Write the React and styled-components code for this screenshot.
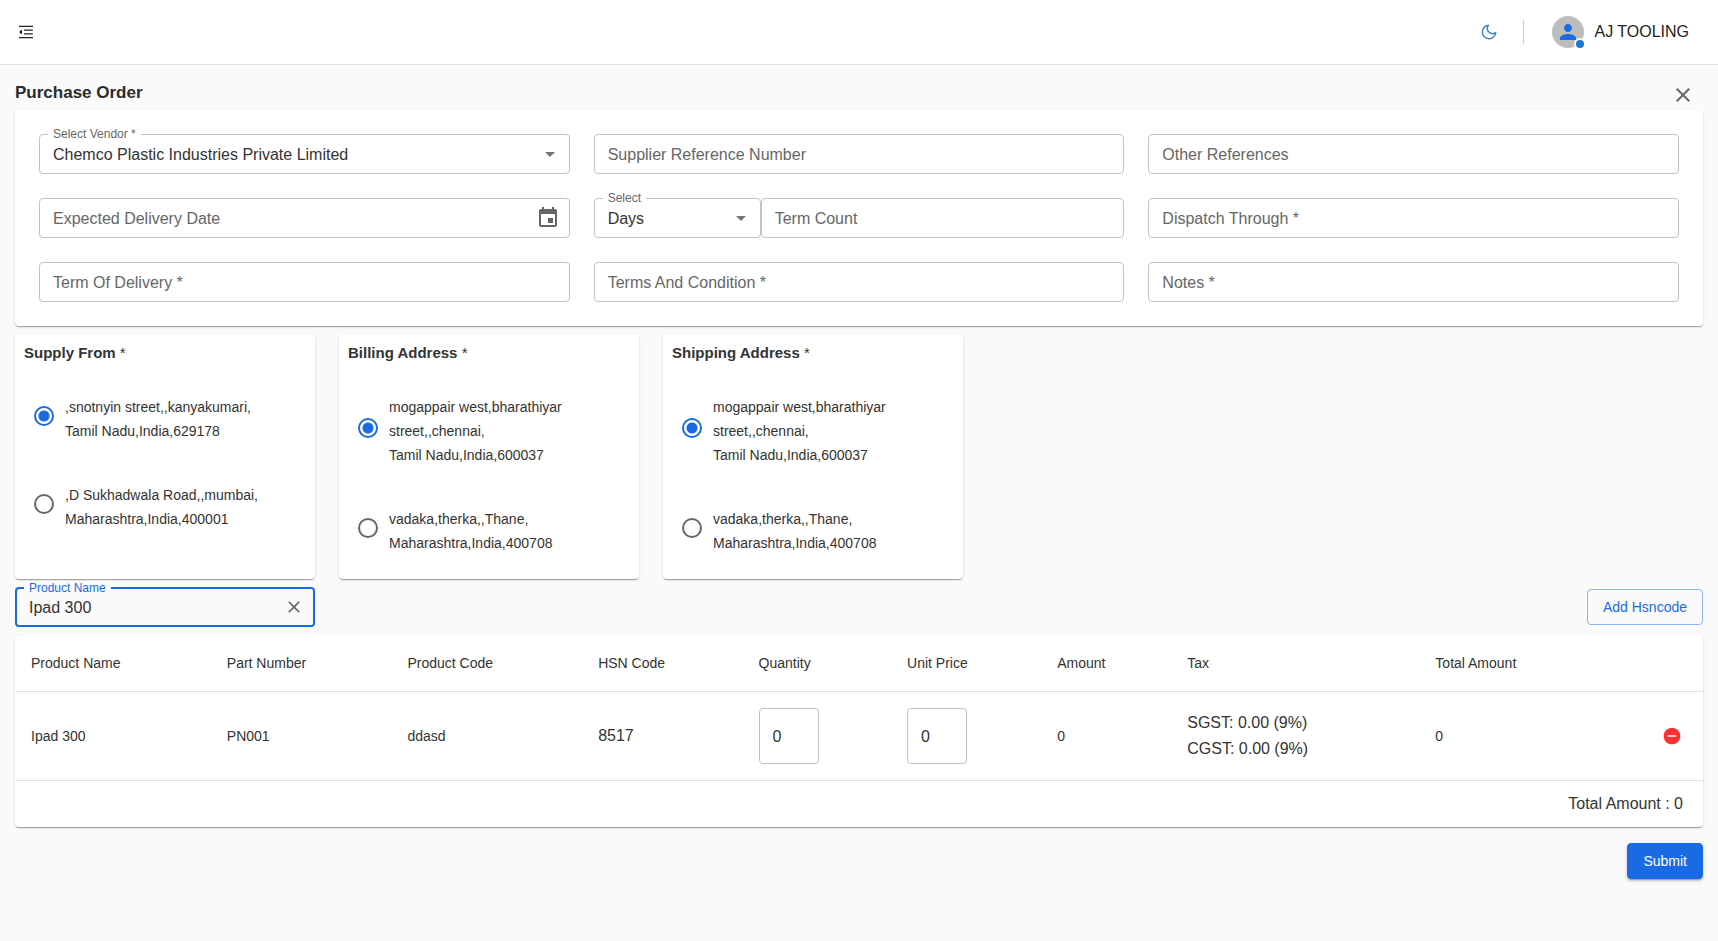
import React, { useState } from "react";
import styled, { createGlobalStyle } from "styled-components";
import { AiOutlineMenuFold } from "react-icons/ai";
import { FiMoon } from "react-icons/fi";
import {
  MdArrowDropDown,
  MdClose,
  MdEvent,
  MdPerson,
  MdRemoveCircle,
} from "react-icons/md";

const BLUE = "#1a6ae4";
const TEXT = "#333333";
const MUTED = "#666666";
const PAGE = "#fafafa";

const GlobalStyle = createGlobalStyle`
  *, *::before, *::after { box-sizing: border-box; }
  body {
    margin: 0;
    background: ${PAGE};
    color: ${TEXT};
    font-family: "Liberation Sans", Arial, sans-serif;
    font-size: 16px;
  }
  button, input, select { font: inherit; color: inherit; }
`;

const TopBar = styled.header`
  display: flex;
  align-items: center;
  justify-content: space-between;
  height: 65px;
  padding: 0 29px 0 16px;
  background: #ffffff;
  border-bottom: 1px solid #e2e2e2;
`;

const IconButton = styled.button`
  display: inline-flex;
  align-items: center;
  justify-content: center;
  flex: none;
  width: ${(p) => p.$box}px;
  height: ${(p) => p.$box}px;
  padding: 0;
  border: 0;
  border-radius: 50%;
  background: transparent;
  color: ${(p) => p.$color || MUTED};
  font-size: ${(p) => p.$size}px;
  vertical-align: middle;
  cursor: pointer;
`;

const Account = styled.div`
  display: flex;
  align-items: center;
`;

const Divider = styled.span`
  width: 1px;
  height: 24px;
  margin: 0 28px 0 22px;
  background: #cccccc;
`;

const Avatar = styled.span`
  position: relative;
  display: flex;
  align-items: center;
  justify-content: center;
  width: 32px;
  height: 32px;
  margin-right: 10px;
  border-radius: 50%;
  background: #bdbdbd;
  color: ${BLUE};
  font-size: 24px;
`;

const StatusDot = styled.span`
  position: absolute;
  right: -2px;
  bottom: -2px;
  width: 12px;
  height: 12px;
  border: 2px solid #ffffff;
  border-radius: 50%;
  background: #1976d2;
`;

const UserName = styled.span`
  color: #222222;
`;

const Page = styled.main`
  padding: 9px 15px 24px;
`;

const TitleRow = styled.div`
  display: flex;
  align-items: flex-end;
  justify-content: space-between;
  height: 36px;
  padding-right: 5px;
`;

const PageTitle = styled.h1`
  margin: 0;
  font-size: 17px;
  line-height: 34px;
  color: #2b2b2b;
`;

const Card = styled.section`
  background: #ffffff;
  border-radius: 4px;
  box-shadow: 0 2px 1px -1px rgba(0, 0, 0, 0.2),
    0 1px 1px 0 rgba(0, 0, 0, 0.14), 0 1px 3px 0 rgba(0, 0, 0, 0.12);
`;

const FormGrid = styled(Card)`
  display: grid;
  grid-template-columns: repeat(3, minmax(0, 1fr));
  gap: 24px;
  padding: 24px;
`;

const TermGroup = styled.div`
  display: grid;
  grid-template-columns: 167px minmax(0, 1fr);
`;

const FieldBox = styled.div`
  position: relative;
  display: flex;
  align-items: center;
  height: 40px;
  border: ${(p) => (p.$active ? `2px solid ${BLUE}` : "1px solid #c2c2c2")};
  border-radius: 4px;
`;

const FloatingLabel = styled.label`
  position: absolute;
  top: -8px;
  left: 8px;
  padding: 0 5px;
  background: ${(p) => p.$surface};
  color: ${(p) => p.$color};
  font-size: 12px;
  line-height: 14px;
`;

const controlStyle = `
  flex: 1;
  min-width: 0;
  width: 100%;
  height: 100%;
  border: 0;
  outline: 0;
  background: transparent;
`;

const TextInput = styled.input`
  ${controlStyle}
  padding: 2px 13px 0;
  &::placeholder { color: ${MUTED}; opacity: 1; }
`;

const Select = styled.select`
  ${controlStyle}
  padding: 0 13px;
  appearance: none;
`;

const SelectArrow = styled(MdArrowDropDown)`
  position: absolute;
  right: 7px;
  font-size: 24px;
  color: #757575;
  pointer-events: none;
`;

const FieldAction = styled.span`
  display: flex;
  padding-right: 9px;
`;

const AddressRow = styled.div`
  display: flex;
  flex-wrap: wrap;
  gap: 24px;
  margin: 8px 0;
`;

const AddressCard = styled(Card)`
  width: 300px;
  padding: 8px 9px 24px;
`;

const AddressTitle = styled.h2`
  margin: 0 0 24px;
  font-size: 15px;
  line-height: 22px;
`;

const Required = styled.span`
  font-weight: 400;
`;

const OptionList = styled.div`
  display: flex;
  flex-direction: column;
  gap: 33px;
  padding: 0 40px 0 10px;
`;

const Option = styled.label`
  display: flex;
  align-items: center;
  gap: 11px;
  cursor: pointer;
`;

const Radio = styled.input`
  appearance: none;
  flex: none;
  width: 20px;
  height: 20px;
  margin: 0;
  border: 2px solid #666666;
  border-radius: 50%;
  &:checked {
    border-color: ${BLUE};
    background: radial-gradient(circle, ${BLUE} 5px, transparent 6px);
  }
`;

const AddressText = styled.span`
  padding-top: 7px;
  font-size: 14px;
  line-height: 24px;
`;

const AddressLine = styled.span`
  display: block;
`;

const ProductBar = styled.div`
  display: flex;
  align-items: center;
  justify-content: space-between;
  margin-bottom: 8px;
`;

const ProductField = styled(FieldBox)`
  width: 300px;
  ${FloatingLabel} { left: 7px; }
  ${TextInput} { padding-left: 12px; }
`;

const Button = styled.button`
  height: 36px;
  padding: 0 15px;
  border: 1px solid ${(p) => (p.$solid ? BLUE : "#8cb4f1")};
  border-radius: 4px;
  background: ${(p) => (p.$solid ? BLUE : "transparent")};
  color: ${(p) => (p.$solid ? "#ffffff" : BLUE)};
  font-size: 14px;
  font-weight: 500;
  box-shadow: ${(p) =>
    p.$solid
      ? "0 3px 1px -2px rgba(0,0,0,.2), 0 2px 2px 0 rgba(0,0,0,.14), 0 1px 5px 0 rgba(0,0,0,.12)"
      : "none"};
  cursor: pointer;
`;

const Table = styled.table`
  width: 100%;
  table-layout: fixed;
  border-collapse: separate;
  border-spacing: 0;
`;

const Col = styled.col`
  width: ${(p) => p.$share};
`;

const HeadCell = styled.th`
  height: 57px;
  padding: 0 16px;
  border-bottom: 1px solid #e0e0e0;
  font-size: 14px;
  font-weight: 400;
  text-align: left;
`;

const Cell = styled.td`
  height: 89px;
  padding: 0 16px;
  border-bottom: 1px solid #e0e0e0;
  font-size: ${(p) => (p.$large ? 16 : 14)}px;
  line-height: 26px;
  text-align: ${(p) => (p.$end ? "right" : "left")};
`;

const TotalCell = styled.td`
  height: 46px;
  padding: 0 20px;
  text-align: right;
`;

const NumberInput = styled.input`
  display: block;
  width: 60px;
  height: 56px;
  padding: 2px 13px 0;
  border: 1px solid #c2c2c2;
  border-radius: 4px;
  background: transparent;
`;

const Actions = styled.div`
  display: flex;
  justify-content: flex-end;
  margin-top: 16px;
`;

const addressGroups = [
  {
    id: "supply",
    title: "Supply From",
    options: [
      [",snotnyin street,,kanyakumari,", "Tamil Nadu,India,629178"],
      [",D Sukhadwala Road,,mumbai,", "Maharashtra,India,400001"],
    ],
  },
  {
    id: "billing",
    title: "Billing Address",
    options: [
      ["mogappair west,bharathiyar street,,chennai,", "Tamil Nadu,India,600037"],
      ["vadaka,therka,,Thane,", "Maharashtra,India,400708"],
    ],
  },
  {
    id: "shipping",
    title: "Shipping Address",
    options: [
      ["mogappair west,bharathiyar street,,chennai,", "Tamil Nadu,India,600037"],
      ["vadaka,therka,,Thane,", "Maharashtra,India,400708"],
    ],
  },
];

const columns = [
  ["Product Name", "11.6%"],
  ["Part Number", "10.7%"],
  ["Product Code", "11.3%"],
  ["HSN Code", "9.5%"],
  ["Quantity", "8.8%"],
  ["Unit Price", "8.9%"],
  ["Amount", "7.7%"],
  ["Tax", "14.7%"],
  ["Total Amount", "10.8%"],
];

function TextField({ label, children }) {
  return (
    <FieldBox>
      <TextInput type="text" aria-label={label} placeholder={label} />
      {children}
    </FieldBox>
  );
}

function SelectField({ id, label, value }) {
  return (
    <FieldBox>
      <FloatingLabel htmlFor={id} $surface="#ffffff" $color={MUTED}>
        {label}
      </FloatingLabel>
      <Select id={id} defaultValue={value}>
        <option>{value}</option>
      </Select>
      <SelectArrow aria-hidden />
    </FieldBox>
  );
}

function AddressPicker({ group }) {
  const [picked, setPicked] = useState(0);
  return (
    <AddressCard>
      <AddressTitle id={group.id}>
        {group.title} <Required>*</Required>
      </AddressTitle>
      <OptionList role="radiogroup" aria-labelledby={group.id}>
        {group.options.map((lines, i) => (
          <Option key={i}>
            <Radio
              type="radio"
              name={group.id}
              checked={picked === i}
              onChange={() => setPicked(i)}
            />
            <AddressText>
              {lines.map((line) => (
                <AddressLine key={line}>{line}</AddressLine>
              ))}
            </AddressText>
          </Option>
        ))}
      </OptionList>
    </AddressCard>
  );
}

export default function App() {
  const [product, setProduct] = useState("Ipad 300");
  return (
    <>
      <GlobalStyle />
      <TopBar>
        <IconButton $box={20} $size={18} $color="#222222" aria-label="Collapse menu">
          <AiOutlineMenuFold />
        </IconButton>
        <Account>
          <IconButton $box={24} $size={18} $color="#3f82c4" aria-label="Dark mode">
            <FiMoon />
          </IconButton>
          <Divider />
          <Avatar>
            <MdPerson />
            <StatusDot />
          </Avatar>
          <UserName>AJ TOOLING</UserName>
        </Account>
      </TopBar>

      <Page>
        <TitleRow>
          <PageTitle>Purchase Order</PageTitle>
          <IconButton $box={30} $size={24} aria-label="Close">
            <MdClose />
          </IconButton>
        </TitleRow>

        <FormGrid>
          <SelectField
            id="vendor"
            label="Select Vendor *"
            value="Chemco Plastic Industries Private Limited"
          />
          <TextField label="Supplier Reference Number" />
          <TextField label="Other References" />
          <TextField label="Expected Delivery Date">
            <FieldAction>
              <IconButton $box={24} $size={24} aria-label="Choose date">
                <MdEvent />
              </IconButton>
            </FieldAction>
          </TextField>
          <TermGroup>
            <SelectField id="term" label="Select" value="Days" />
            <TextField label="Term Count" />
          </TermGroup>
          <TextField label="Dispatch Through *" />
          <TextField label="Term Of Delivery *" />
          <TextField label="Terms And Condition *" />
          <TextField label="Notes *" />
        </FormGrid>

        <AddressRow>
          {addressGroups.map((group) => (
            <AddressPicker key={group.id} group={group} />
          ))}
        </AddressRow>

        <ProductBar>
          <ProductField $active>
            <FloatingLabel htmlFor="product" $surface={PAGE} $color={BLUE}>
              Product Name
            </FloatingLabel>
            <TextInput
              id="product"
              type="text"
              value={product}
              onChange={(e) => setProduct(e.target.value)}
            />
            <FieldAction>
              <IconButton
                $box={20}
                $size={20}
                aria-label="Clear"
                onClick={() => setProduct("")}
              >
                <MdClose />
              </IconButton>
            </FieldAction>
          </ProductField>
          <Button type="button">Add Hsncode</Button>
        </ProductBar>

        <Card>
          <Table>
            <colgroup>
              {columns.map(([name, share]) => (
                <Col key={name} $share={share} />
              ))}
              <col />
            </colgroup>
            <thead>
              <tr>
                {columns.map(([name]) => (
                  <HeadCell key={name} scope="col">
                    {name}
                  </HeadCell>
                ))}
                <HeadCell as="td" />
              </tr>
            </thead>
            <tbody>
              <tr>
                <Cell>Ipad 300</Cell>
                <Cell>PN001</Cell>
                <Cell>ddasd</Cell>
                <Cell $large>8517</Cell>
                <Cell $large>
                  <NumberInput type="text" inputMode="numeric" aria-label="Quantity" defaultValue="0" />
                </Cell>
                <Cell $large>
                  <NumberInput type="text" inputMode="numeric" aria-label="Unit Price" defaultValue="0" />
                </Cell>
                <Cell>0</Cell>
                <Cell $large>
                  SGST: 0.00 (9%)
                  <br />
                  CGST: 0.00 (9%)
                </Cell>
                <Cell>0</Cell>
                <Cell $end>
                  <IconButton $box={30} $size={20} $color="#ff3030" aria-label="Remove row">
                    <MdRemoveCircle />
                  </IconButton>
                </Cell>
              </tr>
            </tbody>
            <tfoot>
              <tr>
                <TotalCell colSpan={10}>Total Amount : 0</TotalCell>
              </tr>
            </tfoot>
          </Table>
        </Card>

        <Actions>
          <Button type="submit" $solid>
            Submit
          </Button>
        </Actions>
      </Page>
    </>
  );
}
